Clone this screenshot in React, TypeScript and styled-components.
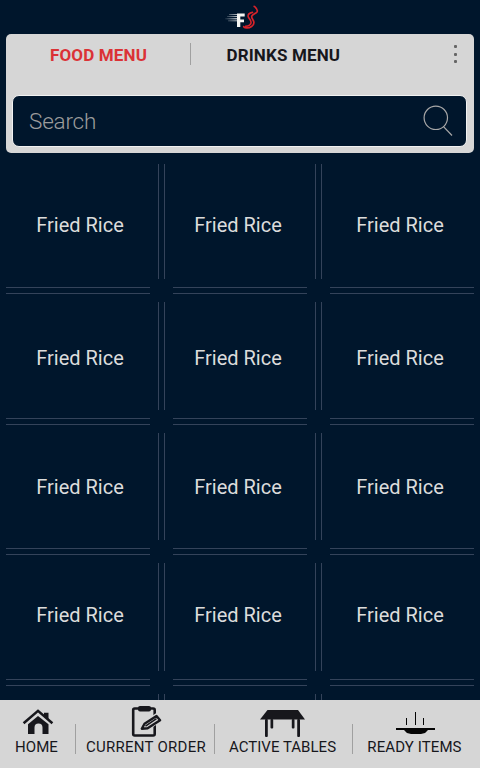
import React from "react";
import styled, { createGlobalStyle } from "styled-components";

const navy = "#00162c";
const silver = "#d6d6d6";
const ink = "#17171c";
const rule = "#34435a";

const GlobalStyle = createGlobalStyle`
  * { box-sizing: border-box; }
  body { margin: 0; background: ${navy}; }
`;

const Screen = styled.div`
  width: 480px;
  height: 768px;
  display: flex;
  flex-direction: column;
  overflow: hidden;
  background: ${navy};
  font-family: Roboto, "Liberation Sans", sans-serif;
`;

const Brand = styled.header`
  height: 34px;
  padding: 5px 0 0 224px;
  flex: none;
  svg { display: block; }
`;

const MenuPanel = styled.section`
  flex: none;
  height: 119px;
  margin: 0 6px;
  padding: 0 6px;
  border-radius: 5px;
  background: ${silver};
`;

const Tabs = styled.nav`
  display: grid;
  grid-template-columns: 178px 1px 1fr 23px;
  align-items: center;
  height: 42px;
  margin-bottom: 19px;
`;

const Tab = styled.span<{ $active?: boolean }>`
  padding-left: ${(p) => (p.$active ? 38 : 35.5)}px;
  white-space: nowrap;
  font-size: 17px;
  line-height: 20px;
  font-weight: 700;
  letter-spacing: 0.15px;
  color: ${(p) => (p.$active ? "#db3236" : ink)};
`;

const TabRule = styled.span`
  width: 1px;
  height: 22px;
  margin-top: -3px;
  background: #a0a0a0;
`;

const More = styled.span`
  display: flex;
  flex-direction: column;
  gap: 4.5px;
  padding: 0 0 2px 9px;
`;

const Dot = styled.i`
  width: 3px;
  height: 3px;
  border-radius: 1px;
  background: #666;
`;

const SearchBox = styled.div`
  display: flex;
  align-items: center;
  justify-content: space-between;
  height: 52px;
  width: 455px;
  padding: 0 13px 0 16px;
  border: 1px solid #f2f2f2;
  border-radius: 7px;
  background: ${navy};
  svg { display: block; }
`;

const SearchLabel = styled.span`
  padding-bottom: 1px;
  font-size: 22.5px;
  line-height: 28px;
  font-weight: 300;
  letter-spacing: -0.2px;
  color: #9c9c9c;
`;

const Board = styled.main`
  flex: 1;
  min-height: 0;
  overflow: hidden;
  display: grid;
  grid-template-columns: 144px 7px 134px 7px 144px;
  grid-template-rows: 115px 7px 108px 7px 107px 7px 108px 7px 108px;
  gap: 8px;
  padding: 11px 6px 0;
`;

const Dish = styled.div<{ $x: number; $y: number }>`
  display: flex;
  align-items: center;
  justify-content: center;
  transform: translate(${(p) => p.$x}px, ${(p) => p.$y}px);
  font-size: 20px;
  line-height: 24px;
  color: #dcdcdc;
  white-space: nowrap;
`;

const DoubleColumn = styled.i`
  border: solid ${rule};
  border-width: 0 1px;
`;

const DoubleRow = styled.i`
  border: solid ${rule};
  border-width: 1px 0;
`;

const Blank = styled.i``;

const BottomBar = styled.nav`
  flex: none;
  height: 68px;
  display: grid;
  grid-template-columns: 75px 1px 138px 1px 137px 1px 127px;
  background: ${silver};
`;

const BarItem = styled.div<{ $shift: number; $iconShift: number }>`
  display: flex;
  flex-direction: column;
  align-items: center;
  padding-top: 5px;
  margin-left: ${(p) => p.$shift}px;
  svg {
    display: block;
    flex: none;
    margin-left: ${(p) => p.$iconShift}px;
  }
`;

const BarLabel = styled.span<{ $track?: number }>`
  font-size: 15px;
  line-height: 20px;
  letter-spacing: ${(p) => p.$track ?? 0.03}px;
  color: ${ink};
  white-space: nowrap;
`;

const BarRule = styled.i`
  height: 30px;
  margin-top: 24px;
  background: #a0a0a0;
`;

const Logo = () => (
  <svg width="36" height="26" viewBox="224 5 36 26">
    <defs>
      <linearGradient id="trail" x1="225" x2="238" y1="0" y2="0" gradientUnits="userSpaceOnUse">
        <stop offset="0" stopColor="#fff" stopOpacity="0.05" />
        <stop offset="1" stopColor="#fff" stopOpacity="0.75" />
      </linearGradient>
    </defs>
    <g fill="url(#trail)">
      <rect x="229" y="14" width="9" height="1" />
      <rect x="227" y="16" width="11" height="1" />
      <rect x="225" y="18" width="13" height="1.4" />
      <rect x="228" y="20.3" width="10" height="1" />
    </g>
    <path d="M237 13.500h7.700v3H240.300v3h3.700v2.800h-3.700V27H237z" fill="#f5f5f2" />
    <g fill="none" stroke="#d8232a" strokeLinecap="round">
      <path d="M254.200 6.300c2.300 2 4.200 3.400 2.800 5.600-1.300 1.900-3.900 1.900-5.100 4-1.100 2.200 2 3.800 2 6.700.1 3.200-3.900 5.500-7.300 5.300-1.800-.1-2.900-.6-2.900-1.300" strokeWidth="1.700" />
      <path d="M252.500 12.400c-2.800.600-4.700 2-4.400 4 .3 2 2.900 3.200 3 5.900.1 2.200-2.400 3.800-5.600 3.900" strokeWidth="1.600" />
    </g>
  </svg>
);

const Magnifier = () => (
  <svg width="30" height="32" viewBox="423 105 30 32" fill="none" stroke="#a8a8a8" strokeWidth="1.2">
    <circle cx="435.800" cy="117.800" r="11.700" />
    <path d="M443.500 126.600 452 135.500" />
  </svg>
);

const HomeIcon = () => (
  <svg width="32" height="32" viewBox="22 705 32 32">
    <path d="M28 724.200 38 716l10.500 8.200V734H42.500v-6.500a4 4 0 0 0-8 0v6.500H28z" fill={ink} />
    <path d="M44 712.700h4.500v7L44 716z" fill={ink} />
    <path d="m23.600 723.300 14.400-12.500 14.400 12.500" fill="none" stroke={ink} strokeWidth="2.500" />
  </svg>
);

const OrderIcon = () => (
  <svg width="32" height="32" viewBox="131 705 32 32">
    <rect x="133.200" y="708.500" width="21.500" height="27" rx="1.500" fill="none" stroke={ink} strokeWidth="2.600" />
    <rect x="138" y="706" width="13" height="5.500" rx="2" fill={ink} />
    <path d="M140.500 729.500l3-5.700L156.500 714.700l4.700 5-13.500 9z" fill={silver} stroke={silver} strokeWidth="3" />
    <path d="M141.800 728.700l2.700-5L156.500 716l3.600 4.200-12.500 8z" fill={silver} stroke={ink} strokeWidth="2.400" strokeLinejoin="round" />
    <path d="M145.500 726.200l11-7.500" stroke={ink} strokeWidth="1.600" />
  </svg>
);

const TableIcon = () => (
  <svg width="46" height="32" viewBox="260 705 46 32" fill={ink}>
    <path d="M267.500 710h30.500l7 9.500H260z" />
    <rect x="265" y="719" width="2.800" height="18" rx="1" />
    <rect x="270.500" y="719" width="2.700" height="9.500" rx="1" />
    <rect x="291.800" y="719" width="2.700" height="9.500" rx="1" />
    <rect x="297.200" y="719" width="2.800" height="18" rx="1" />
  </svg>
);

const DishIcon = () => (
  <svg width="40" height="32" viewBox="396 705 40 32">
    <path d="M406 718h1v7h-1zM415 712h1v13h-1zM423 718h1v7h-1zM396 728h39v2h-39zM404 730h24l-3 3-4 1h-10l-4-1z" fill="#050505" />
  </svg>
);

const columns = [2, -2, -2];
const rows = [3, 2, 0, -2];

export default function App() {
  return (
    <>
      <GlobalStyle />
      <Screen>
        <Brand><Logo /></Brand>
        <MenuPanel>
          <Tabs>
            <Tab $active>FOOD MENU</Tab>
            <TabRule />
            <Tab>DRINKS MENU</Tab>
            <More><Dot /><Dot /><Dot /></More>
          </Tabs>
          <SearchBox>
            <SearchLabel>Search</SearchLabel>
            <Magnifier />
          </SearchBox>
        </MenuPanel>
        <Board>
          {rows.map((y, r) => (
            <React.Fragment key={r}>
              {columns.map((x, c) => (
                <React.Fragment key={c}>
                  <Dish $x={x} $y={y}>Fried Rice</Dish>
                  {c < 2 && <DoubleColumn />}
                </React.Fragment>
              ))}
              <DoubleRow /><Blank /><DoubleRow /><Blank /><DoubleRow />
            </React.Fragment>
          ))}
          <Blank /><DoubleColumn /><Blank /><DoubleColumn /><Blank />
        </Board>
        <BottomBar>
          <BarItem $shift={-2} $iconShift={3}><HomeIcon /><BarLabel>HOME</BarLabel></BarItem>
          <BarRule />
          <BarItem $shift={2} $iconShift={2}><OrderIcon /><BarLabel $track={0.27}>CURRENT ORDER</BarLabel></BarItem>
          <BarRule />
          <BarItem $shift={-2} $iconShift={1}><TableIcon /><BarLabel>ACTIVE TABLES</BarLabel></BarItem>
          <BarRule />
          <BarItem $shift={-4} $iconShift={3}><DishIcon /><BarLabel $track={0.1}>READY ITEMS</BarLabel></BarItem>
        </BottomBar>
      </Screen>
    </>
  );
}
